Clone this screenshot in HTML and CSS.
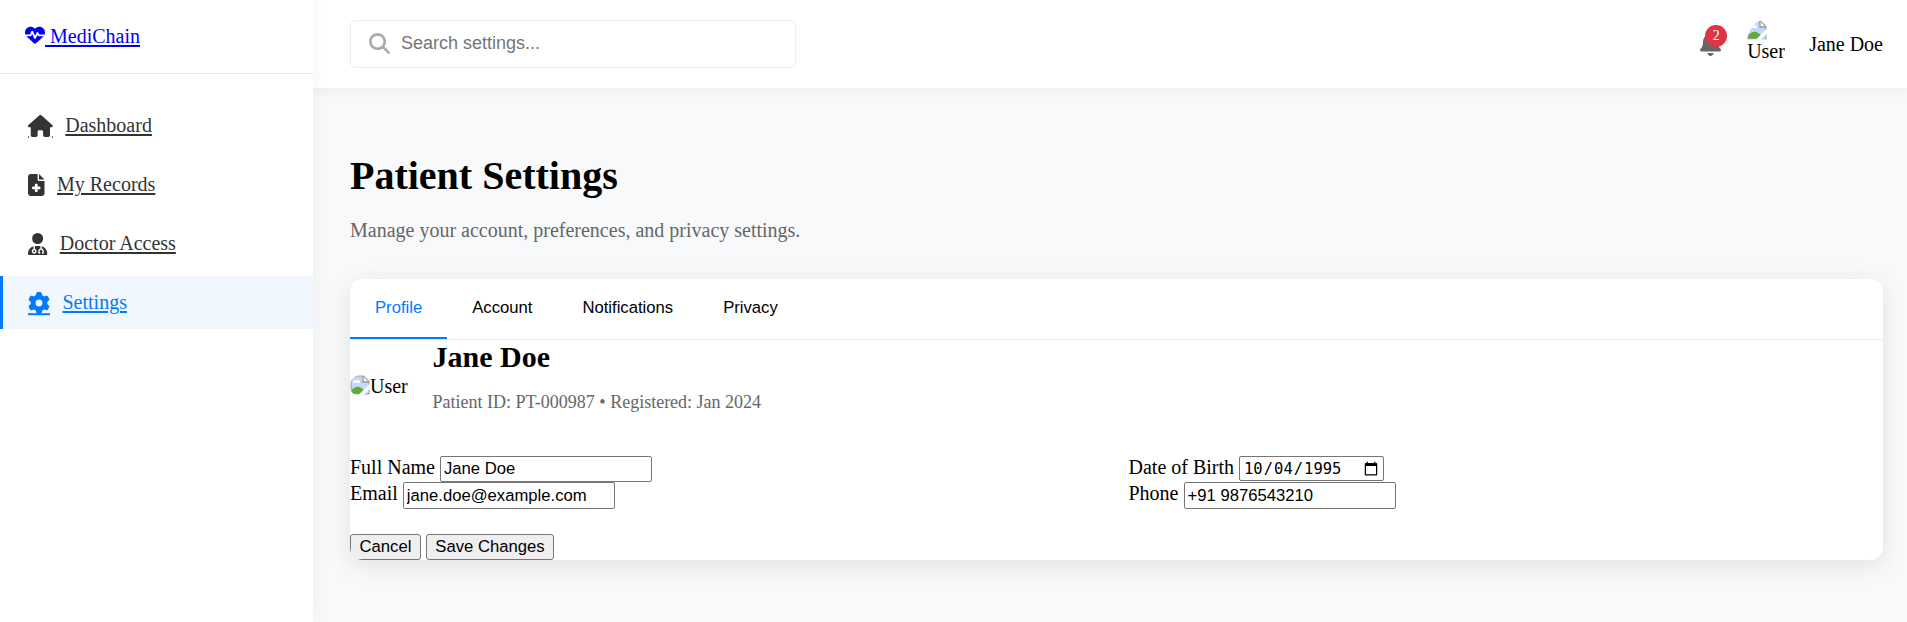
FILE: index.html
```html
<!DOCTYPE html>
<html lang="en">
<head>
<meta charset="utf-8">
<title>Patient Settings</title>
<link rel="stylesheet" href="styles.css">
</head>
<body>
<svg class="defs" width="0" height="0" aria-hidden="true">
  <symbol id="broken" viewBox="0 0 20 20">
    <path d="M1 1H13.500L19 6.500V19H1Z" fill="#c6d7f5"/>
    <path d="M3 8a2.200 2.200 0 0 1 3-2.500a2.500 2.500 0 0 1 4 2.500Z" fill="#fff"/>
    <path d="M1 19V16C5 10.500 10 10.500 14 15.500L11 19Z" fill="#5bad38"/>
    <path d="M13 1V7H19" fill="#fff" stroke="#999" stroke-width="1.300"/>
    <path d="M1 19V1H13.500L19 6.500V19Z" fill="none" stroke="#a3a3a3" stroke-width="1.200"/>
    <path d="M20 8.500L8.500 20H13.500L20 14Z" fill="#fff"/>
  </symbol>
</svg>
<div class="app">
  <aside class="sidebar">
    <div class="brand">
      <a class="logo" href="#"><svg class="logo-icon" viewBox="0 0 512 512"><path d="M228.300 469.100L47.600 300.400c-4.200-3.900-8.200-8.100-11.900-12.400h87c22.600 0 43-13.600 51.700-34.500l10.500-25.200 49.300 109.500c3.800 8.500 12.100 14 21.400 14.100s17.800-5 22-13.300L320 253.700l1.700 3.400c9.500 19 28.900 31 50.100 31H476.300c-3.700 4.300-7.700 8.500-11.900 12.400L283.700 469.100c-7.500 7-17.400 10.900-27.700 10.900s-20.200-3.900-27.700-10.900zM503.700 240h-132c-3 0-5.800-1.700-7.200-4.400l-23.200-46.300c-4.100-8.100-12.400-13.300-21.500-13.300s-17.400 5.100-21.500 13.300l-41.400 82.800L205.900 158.200c-3.900-8.700-12.700-14.300-22.200-14.100s-18.100 5.900-21.800 14.800l-31.800 76.300c-1.200 3-4.200 4.900-7.400 4.900H16c-2.600 0-5 .4-7.300 1.100C3 225.200 0 208.200 0 190.900v-5.800c0-69.900 50.500-129.500 119.400-141C165 36.500 211.400 51.400 244 84l12 12 12-12c32.600-32.600 79-47.500 124.600-39.900C461.500 55.600 512 115.200 512 185.100v5.800c0 16.900-2.800 33.500-8.300 49.100z"/></svg><span class="logo-text">&nbsp;MediChain</span></a>
    </div>
    <nav class="nav">
      <a class="nav-item" href="#"><svg class="nav-icon house" viewBox="0 0 576 512"><path d="M575.800 255.500c0 18-15 32.100-32 32.100h-32l.7 160.200c0 2.700-.2 5.400-.5 8.100V472c0 22.100-17.900 40-40 40H456c-1.100 0-2.200 0-3.300-.1c-1.400 .1-2.800 .1-4.200 .1H416 392c-22.100 0-40-17.900-40-40V448 384c0-17.700-14.300-32-32-32H256c-17.700 0-32 14.300-32 32v64 24c0 22.100-17.900 40-40 40H160 128.100c-1.500 0-3-.1-4.500-.2c-1.200 .1-2.400 .2-3.600 .2H104c-22.100 0-40-17.900-40-40V360c0-.9 0-1.900 .1-2.800V287.600H32c-18 0-32-14-32-32.100c0-9 3-17 10-24L266.400 8c7-7 15-8 22-8s15 2 21 7L564.800 231.500c8 7 12 15 11 24z"/><path d="M4 489h18v46H4zM555 489h18v46h-18z"/></svg><span>Dashboard</span></a>
      <a class="nav-item" href="#"><svg class="nav-icon file" viewBox="0 0 384 512"><path d="M64 0C28.700 0 0 28.700 0 64V448c0 35.300 28.700 64 64 64H320c35.300 0 64-28.700 64-64V160H256c-17.700 0-32-14.300-32-32V0H64zM256 0V128H384L256 0zM160 240c0-8.800 7.200-16 16-16h32c8.800 0 16 7.200 16 16v48h48c8.800 0 16 7.200 16 16v32c0 8.800-7.200 16-16 16H224v48c0 8.800-7.200 16-16 16H176c-8.800 0-16-7.200-16-16V352H112c-8.800 0-16-7.200-16-16V304c0-8.800 7.200-16 16-16h48V240z"/></svg><span>My Records</span></a>
      <a class="nav-item" href="#"><svg class="nav-icon doctor" viewBox="0 0 448 512"><path d="M224 256A128 128 0 1 0 224 0a128 128 0 1 0 0 256zm-96 55.200C54 332.900 0 401.300 0 482.300C0 498.700 13.300 512 29.700 512H418.300c16.400 0 29.700-13.300 29.700-29.700c0-81-54-149.400-128-171.100V362c27.600 7.100 48 32.200 48 62v40c0 8.800-7.200 16-16 16H336c-8.800 0-16-7.200-16-16s7.200-16 16-16V424c0-17.700-14.300-32-32-32s-32 14.300-32 32v24c8.800 0 16 7.200 16 16s-7.200 16-16 16H256c-8.800 0-16-7.200-16-16V424c0-29.800 20.400-54.900 48-62V304.900c-6-.6-12.100-.9-18.300-.9H178.300c-6.200 0-12.300 .3-18.300 .9v65.400c23.100 6.900 40 28.300 40 53.700c0 30.900-25.100 56-56 56s-56-25.100-56-56c0-25.400 16.900-46.800 40-53.700V311.200zM144 448a24 24 0 1 0 0-48 24 24 0 1 0 0 48z"/></svg><span>Doctor Access</span></a>
      <a class="nav-item active" href="#"><svg class="nav-icon gear" viewBox="0 0 512 512"><path d="M495.900 166.600c3.200 8.700 .5 18.400-6.400 24.600l-43.300 39.400c1.100 8.300 1.700 16.800 1.700 25.400s-.6 17.100-1.700 25.400l43.300 39.400c6.900 6.200 9.600 15.900 6.400 24.600c-4.400 11.900-9.700 23.300-15.800 34.300l-4.700 8.100c-6.600 11-14 21.400-22.100 31.200c-5.900 7.200-15.700 9.600-24.500 6.800l-55.700-17.700c-13.400 10.300-28.200 18.900-44 25.400l-12.500 57.100c-2 9.100-9 16.300-18.200 17.800c-13.800 2.300-28 3.500-42.500 3.500s-28.700-1.200-42.500-3.500c-9.200-1.500-16.200-8.700-18.200-17.800l-12.500-57.100c-15.800-6.500-30.600-15.100-44-25.400L83.100 425.900c-8.800 2.800-18.600 .3-24.500-6.800c-8.100-9.800-15.500-20.200-22.100-31.200l-4.700-8.100c-6.100-11-11.400-22.400-15.800-34.300c-3.200-8.700-.5-18.400 6.400-24.600l43.300-39.400C64.600 273.100 64 264.600 64 256s.6-17.100 1.700-25.400L22.400 191.200c-6.900-6.200-9.600-15.900-6.400-24.600c4.400-11.900 9.700-23.300 15.800-34.300l4.700-8.100c6.600-11 14-21.400 22.100-31.200c5.900-7.200 15.700-9.600 24.500-6.800l55.700 17.700c13.400-10.300 28.200-18.900 44-25.400l12.500-57.100c2-9.100 9-16.300 18.200-17.800C227.300 1.200 241.500 0 256 0s28.700 1.200 42.500 3.500c9.200 1.500 16.200 8.700 18.200 17.800l12.500 57.100c15.800 6.500 30.600 15.100 44 25.400l55.700-17.700c8.800-2.800 18.600-.3 24.500 6.800c8.100 9.800 15.500 20.200 22.100 31.200l4.700 8.100c6.100 11 11.400 22.400 15.800 34.300zM256 336a80 80 0 1 0 0-160 80 80 0 1 0 0 160z"/><path d="M0 494h512v46H0z"/></svg><span>Settings</span></a>
    </nav>
  </aside>
  <div class="page">
    <header class="topbar">
      <div class="search">
        <svg class="search-icon" viewBox="0 0 512 512"><path d="M416 208c0 45.900-14.900 88.300-40 122.700L502.600 457.400c12.500 12.500 12.500 32.800 0 45.300s-32.800 12.500-45.300 0L330.700 376c-34.400 25.200-76.800 40-122.700 40C93.100 416 0 322.900 0 208S93.100 0 208 0S416 93.100 416 208zM208 352a144 144 0 1 0 0-288 144 144 0 1 0 0 288z"/></svg>
        <input class="search-input" type="text" placeholder="Search settings...">
      </div>
      <div class="user">
        <div class="bell">
          <svg class="bell-icon" viewBox="0 0 448 512"><path d="M224 0c-17.700 0-32 14.300-32 32V51.200C119 66 64 130.600 64 208v18.800c0 47-17.300 92.400-48.500 127.600l-7.400 8.300c-8.400 9.400-10.400 22.900-5.300 34.400S19.400 416 32 416H416c12.600 0 24-7.400 29.200-18.900s3.100-25-5.300-34.400l-7.400-8.300C401.300 319.200 384 273.900 384 226.800V208c0-77.400-55-142-128-156.800V32c0-17.700-14.300-32-32-32zm45.300 493.300c12-12 18.700-28.300 18.700-45.300H224 160c0 17 6.700 33.300 18.700 45.300s28.300 18.700 45.300 18.700s33.300-6.700 45.300-18.700z"/></svg>
          <span class="badge">2</span>
        </div>
        <div class="avatar-small"><svg class="broken"><use href="#broken"/></svg><span>User</span></div>
        <span class="user-name">Jane Doe</span>
      </div>
    </header>
    <main class="content">
      <h1 class="title">Patient Settings</h1>
      <p class="subtitle">Manage your account, preferences, and privacy settings.</p>
      <section class="card">
        <div class="tabs">
          <button class="tab selected">Profile</button>
          <button class="tab">Account</button>
          <button class="tab">Notifications</button>
          <button class="tab">Privacy</button>
        </div>
        <div class="profile">
          <div class="avatar"><svg class="broken"><use href="#broken"/></svg><span>User</span></div>
          <div class="profile-info">
            <h2 class="profile-name">Jane Doe</h2>
            <p class="profile-meta">Patient ID: PT-000987 • Registered: Jan 2024</p>
          </div>
        </div>
        <div class="form">
          <div class="field"><label>Full Name</label><input class="text" type="text" value="Jane Doe"></div>
          <div class="field"><label>Date of Birth</label><input class="date" type="date" value="1995-10-04"></div>
          <div class="field"><label>Email</label><input class="text tall" type="text" value="jane.doe@example.com"></div>
          <div class="field"><label>Phone</label><input class="text tall" type="text" value="+91 9876543210"></div>
        </div>
        <div class="actions">
          <button class="btn cancel">Cancel</button>
          <button class="btn save">Save Changes</button>
        </div>
      </section>
    </main>
  </div>
</div>
</body>
</html>
```
FILE: styles.css
```css
* { box-sizing: border-box; }
body {
  margin: 0;
  background: #f8f9fb;
  font-family: "Liberation Serif", serif;
  font-size: 20px;
  line-height: 23px;
  color: #000;
  overflow: hidden;
}
.defs { position: absolute; }
.app { display: flex; height: 622px; }
.sidebar {
  position: relative;
  z-index: 2;
  width: 313px;
  flex: none;
  background: #fff;
  box-shadow: 0 0 19px rgba(0, 0, 0, .05);
}
.brand {
  height: 74px;
  padding: 25px;
  border-bottom: 1px solid #e9e9e9;
}
.logo { display: flex; color: #0000ee; text-decoration: none; }
.logo-icon { width: 20px; height: 20px; fill: currentColor; }
.logo-text, .nav-item span {
  text-decoration: underline;
  text-decoration-thickness: 2px;
  text-underline-offset: 2px;
}
.nav { display: flex; flex-direction: column; gap: 6px; padding-top: 25px; }
.nav-item {
  display: flex;
  align-items: center;
  gap: 12.500px;
  height: 53px;
  padding-left: 25px;
  border-left: 3px solid transparent;
  color: #333;
  text-decoration: none;
}
.nav-item.active { background: #f0f7ff; border-color: #007bff; color: #007bff; }
.nav-icon { height: 22px; fill: currentColor; overflow: visible; }
.house { width: 24.750px; }
.file { width: 16.500px; }
.doctor { width: 19.250px; }
.gear { width: 22px; }
.page { flex: 1; display: flex; flex-direction: column; }
.topbar {
  display: flex;
  align-items: center;
  justify-content: space-between;
  height: 88px;
  padding: 0 24px 0 37px;
  background: #fff;
  box-shadow: 0 2px 12px rgba(0, 0, 0, .06);
}
.search {
  display: flex;
  align-items: center;
  gap: 11px;
  width: 446px;
  height: 48px;
  padding: 0 18px 1px;
  border: 1px solid #eee;
  border-radius: 6px;
}
.search-icon { width: 21px; height: 21px; fill: #aaa; flex: none; }
.search-input {
  flex: 1;
  padding: 0;
  border: 0;
  background: none;
  font: 18px "Liberation Sans", sans-serif;
}
.search-input::placeholder { color: #757575; }
.user { display: flex; align-items: center; }
.bell { position: relative; width: 21px; height: 24px; margin-right: 26px; }
.bell-icon { width: 21px; height: 24px; fill: #666; }
.badge {
  position: absolute;
  left: 5px;
  top: -7px;
  width: 22px;
  height: 22px;
  border-radius: 50%;
  background: #dc3545;
  color: #fff;
  font-size: 14px;
  line-height: 21px;
  text-align: center;
}
.avatar-small { display: flex; flex-direction: column; width: 38px; height: 44px; margin: 0 24px 5px 0; overflow: hidden; }
.avatar-small .broken { clip-path: path("M0 18C3 9 8 2 16 0H20V20H0Z"); }
.broken { width: 20px; height: 20px; flex: none; }
.content { padding: 65px 24px 0 37px; }
.title { margin: 0; font-size: 40px; line-height: 46px; }
.subtitle { margin: 20px 0 37px; color: #666; }
.card {
  height: 281px;
  background: #fff;
  border-radius: 12.500px;
  box-shadow: 0 5px 25px rgba(0, 0, 0, .1);
  overflow: hidden;
}
.tabs { display: flex; height: 61px; border-bottom: 1px solid #e9ecef; }
.tab {
  height: 60px;
  padding: 0 25px 1px;
  border: 0;
  border-bottom: 2px solid transparent;
  background: none;
  font: 16.667px "Liberation Sans", sans-serif;
  color: #000;
}
.tab.selected { color: #007bff; border-color: #007bff; }
.profile { display: flex; height: 92px; }
.avatar { display: flex; width: 58px; height: 23px; margin: 35px 24.500px 0 0; }
.avatar .broken { border-radius: 10px 0 0 8px; }
.profile-name { margin: 0; font-size: 30px; line-height: 34px; }
.profile-meta { margin: 18px 0 0; color: #666; font-size: 18px; line-height: 20px; }
.form { display: grid; grid-template-columns: 1fr 1fr; grid-template-rows: 26px 27px; column-gap: 24px; margin-top: 24px; }
.field { display: flex; align-items: flex-start; gap: 5px; }
.text, .date {
  width: 212px;
  height: 26px;
  margin: 0;
  padding: 1px 3px;
  border: 1px solid #767676;
  border-radius: 2px;
  background: #fff;
  color: #000;
  font: 16.667px "Liberation Sans", sans-serif;
}
.text.tall { height: 27px; }
.date { width: 145px; height: 25px; font: 15.500px "DejaVu Sans Mono", monospace; }
.date::-webkit-datetime-edit-fields-wrapper { padding: 0; }
.date::-webkit-calendar-picker-indicator { width: 16px; height: 16px; padding: 0; margin: 0 1px 0 0; }
.actions { display: flex; gap: 5px; margin-top: 25px; }
.btn {
  height: 26px;
  padding: 0;
  border: 1px solid #767676;
  border-radius: 3px;
  background: #efefef;
  color: #000;
  font: 16.667px "Liberation Sans", sans-serif;
}
.cancel { width: 71px; }
.save { width: 128px; }
```
